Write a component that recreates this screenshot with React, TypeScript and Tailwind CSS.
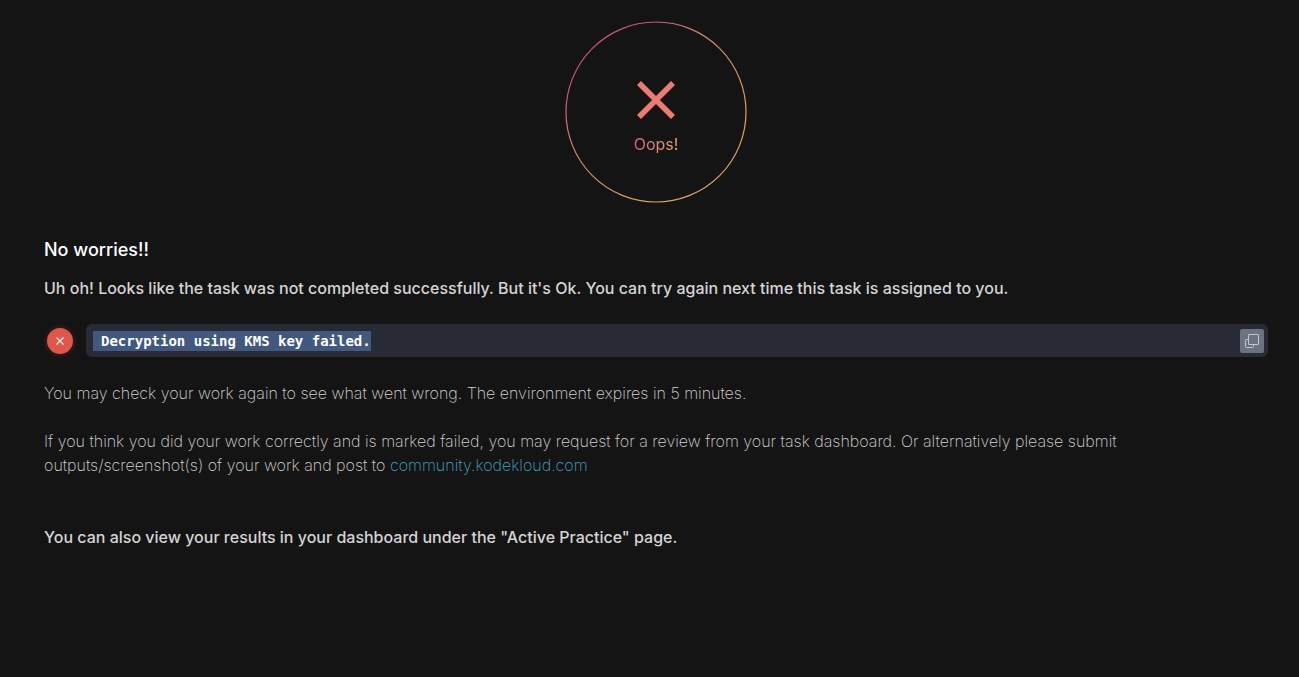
function ResultBadge() {
  return (
    <div className="relative flex h-[182px] w-[182px] flex-col items-center pt-[59px]">
      <svg
        className="absolute inset-0 h-full w-full"
        aria-hidden="true"
        fill="none"
        viewBox="0 0 182 182"
      >
        <defs>
          <linearGradient id="ring" x1="0.1" y1="0.1" x2="0.8" y2="0.9">
            <stop offset="0" stopColor="#cf4f87" />
            <stop offset="0.16" stopColor="#d0557f" />
            <stop offset="0.36" stopColor="#d9806f" />
            <stop offset="1" stopColor="#dfa953" />
          </linearGradient>
        </defs>
        <circle cx="91" cy="91" r="90" stroke="url(#ring)" strokeWidth="1.2" />
      </svg>
      <svg
        className="h-10 w-10"
        aria-hidden="true"
        fill="none"
        viewBox="0 0 40 40"
      >
        <path d="M3 3l34 34M37 3L3 37" stroke="#ee7b72" strokeWidth="5.6" />
      </svg>
      <p className="mt-3 bg-linear-to-r from-[#d3588a] to-[#e2ac5c] bg-clip-text text-base text-transparent">
        Oops!
      </p>
    </div>
  );
}

function FailedCheck({ message }: { message: string }) {
  return (
    <div className="flex items-center gap-[10px]">
      <span className="flex h-8 w-8 shrink-0 items-center justify-center rounded-full bg-[#231918]">
        <span className="flex h-[26px] w-[26px] items-center justify-center rounded-full bg-[#e25549]">
          <svg className="h-2 w-2" aria-hidden="true" fill="none" viewBox="0 0 8 8">
            <path d="m.5.5 7 7m0-7-7 7" stroke="#fff" strokeWidth="1.2" />
          </svg>
        </span>
      </span>
      <div className="flex h-[33px] grow items-center justify-between rounded-md bg-[#282a36] pr-1 pl-[7px]">
        <code className="bg-[#41587f] pl-2 font-['DejaVu_Sans_Mono',monospace] text-sm leading-5 font-bold text-white">
          {message}
        </code>
        <button
          type="button"
          aria-label="Copy"
          className="flex h-6 w-6 items-center justify-center rounded-xs bg-[#6b7280] text-[#c5c8ce]"
        >
          <svg className="h-[14px] w-[14px]" aria-hidden="true" fill="none" viewBox="0 0 14 14">
            <path
              d="M4 .5h9a.5.5 0 0 1 .5.5v9a.5.5 0 0 1-.5.5H4a.5.5 0 0 1-.5-.5V1A.5.5 0 0 1 4 .5ZM3.5 5.5h-2a1 1 0 0 0-1 1v6a1 1 0 0 0 1 1h6a1 1 0 0 0 1-1v-2"
              stroke="currentColor"
            />
          </svg>
        </button>
      </div>
    </div>
  );
}

function App() {
  return (
    <main className="min-h-screen bg-[#141414] pt-[21px] pr-[31px] pl-11 font-['Inter',sans-serif] text-base text-[#d4d4d4]">
      <div className="flex justify-center">
        <ResultBadge />
      </div>
      <h1 className="mt-[33px] text-lg leading-7 font-medium text-white">No worries!!</h1>
      <p className="mt-3 font-medium">
        Uh oh! Looks like the task was not completed successfully. But it's Ok.
        You can try again next time this task is assigned to you.
      </p>
      <div className="mt-6">
        <FailedCheck message="Decryption using KMS key failed." />
      </div>
      <p className="mt-6 font-extralight">
        You may check your work again to see what went wrong. The environment
        expires in 5 minutes.
      </p>
      <p className="mt-6 font-extralight">
        If you think you did your work correctly and is marked failed, you may
        request for a review from your task dashboard. Or alternatively please
        submit outputs/screenshot(s) of your work and post to{" "}
        <a href="https://community.kodekloud.com" className="text-[#42a8c3]">
          community.kodekloud.com
        </a>
      </p>
      <p className="mt-12 font-medium">
        You can also view your results in your dashboard under the "Active
        Practice" page.
      </p>
    </main>
  );
}

export default App;
